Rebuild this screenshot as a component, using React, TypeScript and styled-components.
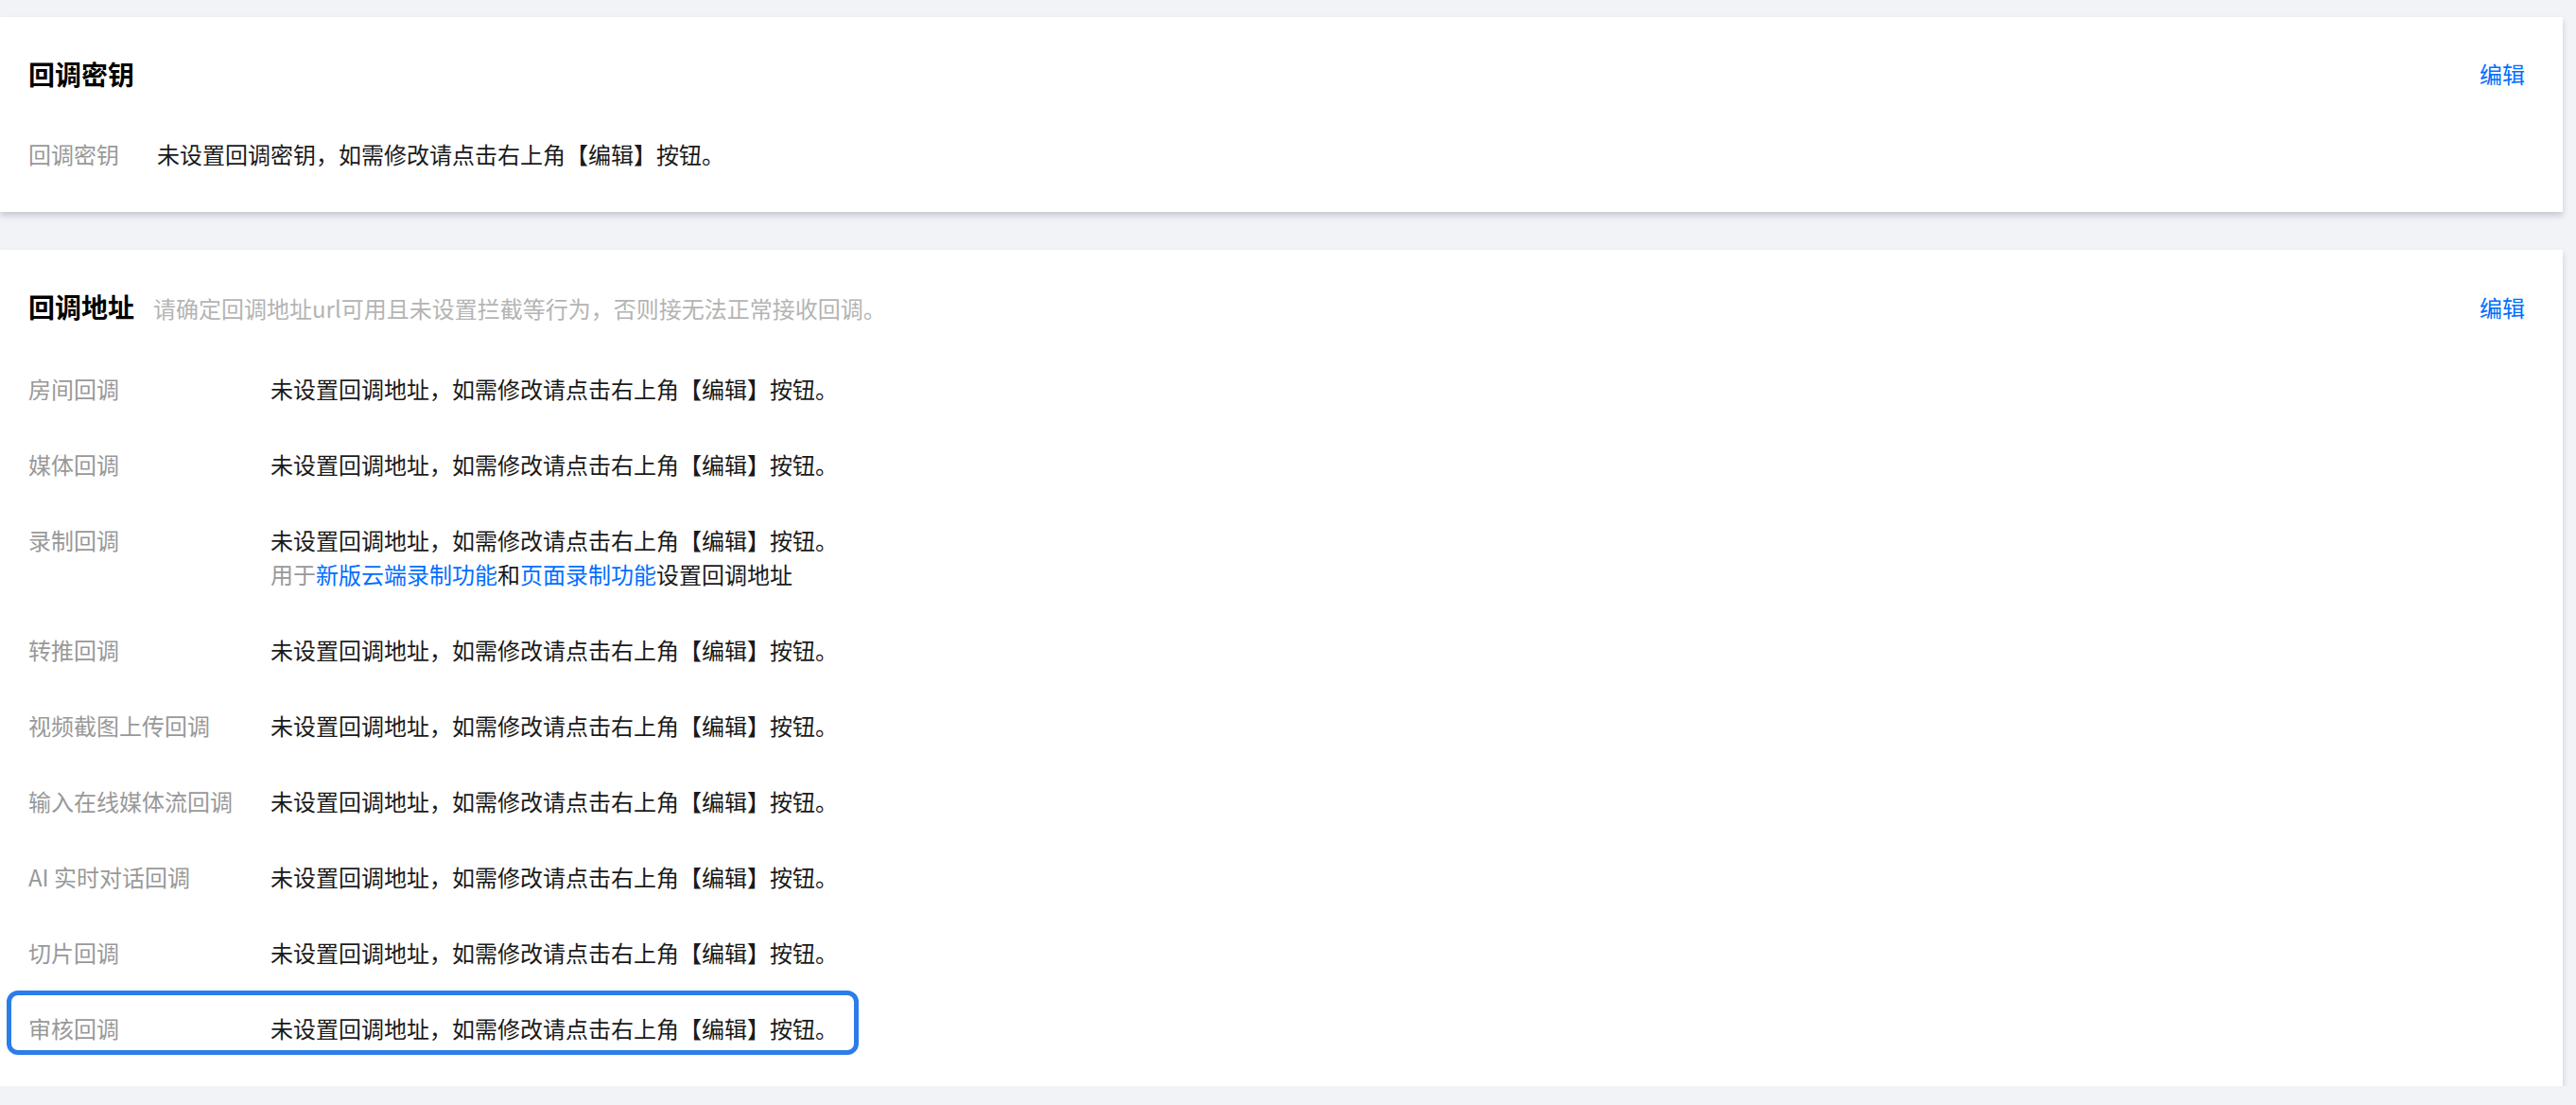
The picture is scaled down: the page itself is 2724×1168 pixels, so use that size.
import React from "react";
import styled, { createGlobalStyle } from "styled-components";

const GlobalStyle = createGlobalStyle`
  html, body {
    margin: 0;
    padding: 0;
    background: #f2f3f7;
  }
  body {
    font-family: "Noto Sans CJK SC", "Noto Sans", sans-serif;
    color: #1a1a1a;
  }
`;

type Item = {
  label: string;
  value: string;
  extra?: boolean;
  highlight?: boolean;
};

const MSG = "未设置回调地址，如需修改请点击右上角【编辑】按钮。";

const items: Item[] = [
  { label: "房间回调", value: MSG },
  { label: "媒体回调", value: MSG },
  { label: "录制回调", value: MSG, extra: true },
  { label: "转推回调", value: MSG },
  { label: "视频截图上传回调", value: MSG },
  { label: "输入在线媒体流回调", value: MSG },
  { label: "AI 实时对话回调", value: MSG },
  { label: "切片回调", value: MSG },
  { label: "审核回调", value: MSG, highlight: true },
];

export default function App() {
  return (
    <>
      <GlobalStyle />
      <Page>
        <Card>
          <Header>
            <TitleGroup>
              <Title>回调密钥</Title>
            </TitleGroup>
            <EditLink>编辑</EditLink>
          </Header>
          <List>
            <Row $labelWidth={96}>
              <Label>回调密钥</Label>
              <Value>未设置回调密钥，如需修改请点击右上角【编辑】按钮。</Value>
            </Row>
          </List>
        </Card>

        <Card>
          <Header>
            <TitleGroup>
              <Title>回调地址</Title>
              <Hint>请确定回调地址url可用且未设置拦截等行为，否则接无法正常接收回调。</Hint>
            </TitleGroup>
            <EditLink>编辑</EditLink>
          </Header>
          <List>
            {items.map((it) => (
              <Row key={it.label} $labelWidth={216} $highlight={it.highlight}>
                <Label>{it.label}</Label>
                <Value>
                  <div>{it.value}</div>
                  {it.extra && (
                    <SubLine>
                      用于<Link>新版云端录制功能</Link>
                      <Dark>和</Dark>
                      <Link>页面录制功能</Link>
                      <Dark>设置回调地址</Dark>
                    </SubLine>
                  )}
                </Value>
              </Row>
            ))}
          </List>
        </Card>
      </Page>
    </>
  );
}

const Page = styled.div`
  display: flex;
  flex-direction: column;
  gap: 40px;
  padding: 18px 14px 0 0;
`;

const Card = styled.section`
  background: #ffffff;
  padding: 42px 40px 43px 30px;
  box-shadow: 0 4px 6px rgba(54, 58, 80, 0.22);
`;

const Header = styled.div`
  display: flex;
  justify-content: space-between;
  align-items: center;
  line-height: 36px;
  margin-bottom: 49px;
`;

const TitleGroup = styled.div`
  display: flex;
  align-items: baseline;
  gap: 20px;
`;

const Title = styled.h2`
  margin: 0;
  font-size: 28px;
  font-weight: 700;
  color: #000000;
  line-height: 36px;
`;

const Hint = styled.span`
  font-size: 24px;
  color: #b4b4b4;
`;

const EditLink = styled.a`
  font-size: 24px;
  color: #006eff;
  cursor: pointer;
`;

const List = styled.div`
  display: flex;
  flex-direction: column;
  align-items: flex-start;
  gap: 44px;
`;

const Row = styled.div<{ $labelWidth: number; $highlight?: boolean }>`
  position: relative;
  display: grid;
  grid-template-columns: ${(p) => p.$labelWidth}px auto;
  column-gap: 40px;
  font-size: 24px;
  line-height: 36px;

  &::after {
    content: "";
    display: ${(p) => (p.$highlight ? "block" : "none")};
    position: absolute;
    top: -22px;
    bottom: -10px;
    left: -23px;
    right: -22px;
    border: 5px solid #2b7de9;
    border-radius: 12px;
    pointer-events: none;
  }
`;

const Label = styled.div`
  color: #999999;
  white-space: nowrap;
`;

const Value = styled.div`
  color: #1a1a1a;
`;

const SubLine = styled.div`
  color: #999999;
`;

const Link = styled.a`
  color: #006eff;
  cursor: pointer;
`;

const Dark = styled.span`
  color: #1a1a1a;
`;
